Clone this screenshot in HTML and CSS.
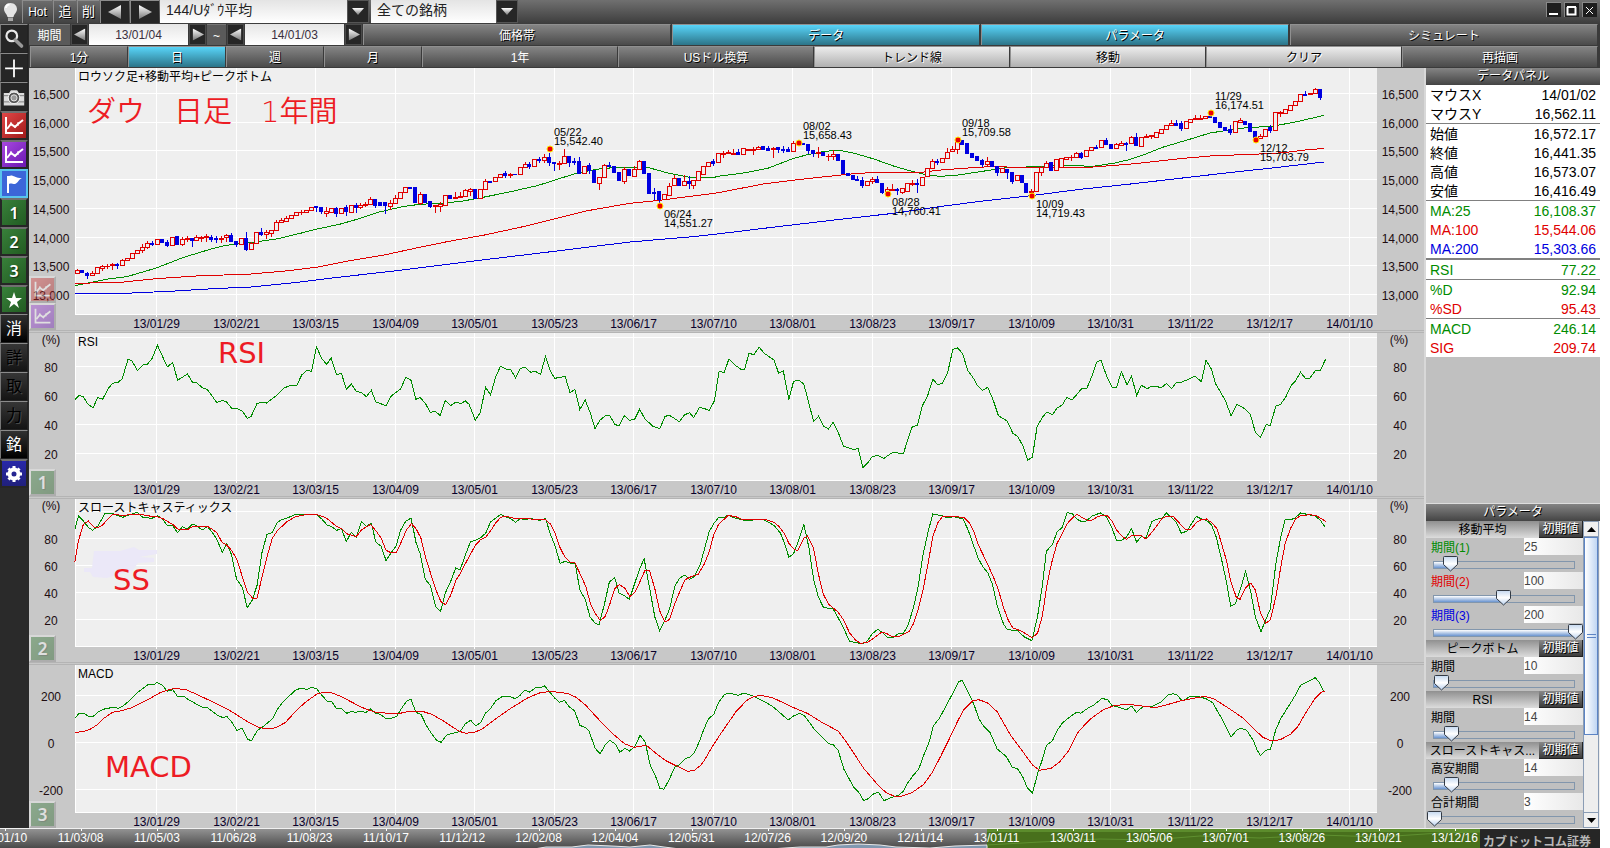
FILE: index.html
```html
<!DOCTYPE html>
<html lang="ja">
<head>
<meta charset="utf-8">
<title>144/Uダウ平均 チャート</title>
<link rel="stylesheet" href="styles.css">
</head>
<body>
<svg class="defs" aria-hidden="true">
  <symbol id="i-chart" viewBox="0 0 24 24">
    <path d="M4 3v16h17" fill="none" stroke="currentColor" stroke-width="2"/>
    <path d="M5 15l4-5 4 3 3-3 5-4" fill="none" stroke="currentColor" stroke-width="2"/>
    <path d="M9 8v4M13 11v3M16 8v4" fill="none" stroke="currentColor" stroke-width="1"/>
  </symbol>
  <symbol id="i-left" viewBox="0 0 14 14"><path d="M13 0v14L0 7z" fill="url(#metal)"/></symbol>
  <symbol id="i-right" viewBox="0 0 14 14"><path d="M1 0v14l13-7z" fill="url(#metal)"/></symbol>
  <symbol id="i-down" viewBox="0 0 12 8"><path d="M0 0h12L6 7z" fill="url(#metal)"/></symbol>
  <defs>
    <linearGradient id="metal" x1="0" y1="0" x2="0" y2="1"><stop offset="0" stop-color="#fff"/><stop offset="1" stop-color="#777"/></linearGradient>
  </defs>
</svg>

<header class="titlebar">
  <button class="tb bulb" aria-label="ヒント"><svg viewBox="0 0 21 23"><path d="M10.500 3c-4 0-6.500 3-6.500 6 0 3.500 3 5 3.500 8h6c.5-3 3.500-4.500 3.500-8 0-3-2.500-6-6.500-6z" fill="#e4e4e4"/><path d="M6 8c0-2 1.500-3.500 3.500-3.500" stroke="#fff" stroke-width="2" fill="none"/><path d="M8 17.500h5v3.500H8z" fill="#a8a8a8"/></svg></button>
  <button class="tb hot">Hot</button>
  <button class="tb add">追</button>
  <button class="tb del">削</button>
  <button class="tb nav" aria-label="前へ"><svg viewBox="0 0 14 14"><use href="#i-left"/></svg></button>
  <button class="tb nav" aria-label="次へ"><svg viewBox="0 0 14 14"><use href="#i-right"/></svg></button>
  <div class="combo wide"><select aria-label="銘柄"><option>144/Uﾀﾞｳ平均</option></select><span class="drop"><svg viewBox="0 0 12 8"><use href="#i-down"/></svg></span></div>
  <div class="combo"><select aria-label="銘柄グループ"><option>全ての銘柄</option></select><span class="drop"><svg viewBox="0 0 12 8"><use href="#i-down"/></svg></span></div>
  <div class="winbtns">
    <button aria-label="最小化"><svg viewBox="0 0 13 13"><path d="M2 10h9" stroke="#fff" stroke-width="2"/></svg></button>
    <button aria-label="最大化"><svg viewBox="0 0 13 13"><path d="M2.500 3v7.500h8V3M2 3h9" stroke="#fff" stroke-width="2" fill="none"/></svg></button>
    <button aria-label="閉じる"><svg viewBox="0 0 13 13"><path d="M3 3l7 7M10 3l-7 7" stroke="#fff" stroke-width="1"/></svg></button>
  </div>
</header>

<div class="workspace">
  <nav class="sidebar">
    <button aria-label="検索"><svg viewBox="0 0 27 27"><circle cx="11" cy="10" r="6" fill="none" stroke="#e8e8e8" stroke-width="2.500"/><path d="M15 14.500l7 7" stroke="#999" stroke-width="4" stroke-linecap="round"/></svg></button>
    <button aria-label="十字線"><svg viewBox="0 0 27 27"><path d="M13.500 4v20M3.500 14h20" stroke="#fff" stroke-width="2"/></svg></button>
    <button aria-label="撮影"><svg viewBox="0 0 27 27"><path d="M2 9h6l2-3h7l2 3h6v14H2z" fill="#dcdcdc"/><path d="M2 12h23M2 19h23" stroke="#777"/><circle cx="13.500" cy="14.500" r="6.500" fill="#555" stroke="#fff"/><circle cx="13.500" cy="14.500" r="3.500" fill="#999" stroke="#eee"/></svg></button>
    <button class="red" aria-label="チャート1"><svg viewBox="0 0 24 24"><use href="#i-chart"/></svg></button>
    <button class="purple" aria-label="チャート2"><svg viewBox="0 0 24 24"><use href="#i-chart"/></svg></button>
    <button class="blue" aria-label="フラグ"><svg viewBox="0 0 24 24"><path d="M6 4v17" stroke="#fff" stroke-width="2"/><path d="M7 4c4-2 5 2 13 2-3 1-4 5-7 6-3 0-4-1-6 0z" fill="#fff"/></svg></button>
    <button class="green">1</button>
    <button class="green">2</button>
    <button class="green">3</button>
    <button class="green" aria-label="お気に入り"><svg viewBox="0 0 24 24"><path d="M12 4l2 6h6l-5 4 2 6-5-4-5 4 2-6-5-4h6z" fill="#fff"/></svg></button>
    <button class="glyph">消</button>
    <button class="glyph" disabled>詳</button>
    <button class="glyph" disabled>取</button>
    <button class="glyph" disabled>力</button>
    <button class="glyph">銘</button>
    <button class="navy" aria-label="設定"><svg viewBox="0 0 24 24"><circle cx="12" cy="12" r="4.500" fill="none" stroke="#fff" stroke-width="4"/><path d="M12 4v3M12 17v3M4 12h3M17 12h3M6.500 6.500l2 2M15.500 15.500l2 2M6.500 17.500l2-2M15.500 8.500l2-2" stroke="#fff" stroke-width="3"/></svg></button>
  </nav>

  <div class="main">
    <div class="range">
      <span class="label">期間</span>
      <button class="step" aria-label="開始日を前へ"><svg viewBox="0 0 14 14"><use href="#i-left"/></svg></button>
      <input aria-label="開始日" value="13/01/04">
      <button class="step" aria-label="開始日を次へ"><svg viewBox="0 0 14 14"><use href="#i-right"/></svg></button>
      <span class="label tilde">~</span>
      <button class="step" aria-label="終了日を前へ"><svg viewBox="0 0 14 14"><use href="#i-left"/></svg></button>
      <input aria-label="終了日" value="14/01/03">
      <button class="step" aria-label="終了日を次へ"><svg viewBox="0 0 14 14"><use href="#i-right"/></svg></button>
      <button class="tab">価格帯</button>
      <button class="tab on">データ</button>
      <button class="tab on">パラメータ</button>
      <button class="tab">シミュレート</button>
    </div>
    <div class="periods">
      <button class="tab">1分</button>
      <button class="tab on">日</button>
      <button class="tab">週</button>
      <button class="tab">月</button>
      <button class="tab flat">1年</button>
      <button class="tab">USドル換算</button>
      <button class="tab light">トレンド線</button>
      <button class="tab light">移動</button>
      <button class="tab light">クリア</button>
      <button class="tab">再描画</button>
    </div>

    <div class="content">
      <div class="charts">
        <section class="panel">
          <svg class="plot" id="price"></svg>
          <h2>ロウソク足+移動平均+ピークボトム</h2>
          <p class="note dow">ダウ　日足　1年間</p>
          <div class="badges">
            <button class="badge red" aria-label="チャート1"><svg viewBox="0 0 24 24"><use href="#i-chart"/></svg></button>
            <button class="badge purple" aria-label="チャート2"><svg viewBox="0 0 24 24"><use href="#i-chart"/></svg></button>
          </div>
        </section>
        <section class="panel">
          <svg class="plot" id="rsi"></svg>
          <h2>RSI</h2>
          <p class="note rsi">RSI</p>
          <div class="badges"><button class="badge green">1</button></div>
        </section>
        <section class="panel">
          <svg class="plot" id="stoch"></svg>
          <h2>スローストキャスティックス</h2>
          <p class="note ss">SS</p>
          <div class="badges"><button class="badge green">2</button></div>
        </section>
        <section class="panel last">
          <svg class="plot" id="macd"></svg>
          <h2>MACD</h2>
          <p class="note macd">MACD</p>
          <div class="badges"><button class="badge green">3</button></div>
        </section>
      </div>

      <aside class="side">
        <h3 class="bar">データパネル</h3>
        <table class="data">
          <tbody>
            <tr><th scope="row">マウスX</th><td>14/01/02</td></tr>
            <tr><th scope="row">マウスY</th><td>16,562.11</td></tr>
          </tbody>
          <tbody>
            <tr><th scope="row">始値</th><td>16,572.17</td></tr>
            <tr><th scope="row">終値</th><td>16,441.35</td></tr>
            <tr><th scope="row">高値</th><td>16,573.07</td></tr>
            <tr><th scope="row">安値</th><td>16,416.49</td></tr>
          </tbody>
          <tbody>
            <tr class="g"><th scope="row">MA:25</th><td>16,108.37</td></tr>
            <tr class="r"><th scope="row">MA:100</th><td>15,544.06</td></tr>
            <tr class="b"><th scope="row">MA:200</th><td>15,303.66</td></tr>
          </tbody>
          <tbody class="thick">
            <tr class="g"><th scope="row">RSI</th><td>77.22</td></tr>
          </tbody>
          <tbody>
            <tr class="g"><th scope="row">%D</th><td>92.94</td></tr>
            <tr class="r"><th scope="row">%SD</th><td>95.43</td></tr>
          </tbody>
          <tbody>
            <tr class="g"><th scope="row">MACD</th><td>246.14</td></tr>
            <tr class="r"><th scope="row">SIG</th><td>209.74</td></tr>
          </tbody>
        </table>

        <div class="params">
          <h3 class="bar">パラメータ</h3>
          <div class="scroller">
            <form class="groups">
              <div class="ghead"><h4>移動平均</h4><button type="button">初期値</button></div>
              <div class="param g"><label for="p1">期間(1)</label><input id="p1" value="25"><div class="slider" style="--fill:11%"><input type="range" aria-label="期間(1)" min="3" max="200" value="25"></div></div>
              <div class="param r"><label for="p2">期間(2)</label><input id="p2" value="100"><div class="slider" style="--fill:49%"><input type="range" aria-label="期間(2)" min="3" max="200" value="100"></div></div>
              <div class="param b"><label for="p3">期間(3)</label><input id="p3" value="200"><div class="slider" style="--fill:100%"><input type="range" aria-label="期間(3)" min="3" max="200" value="200"></div></div>
              <div class="ghead"><h4>ピークボトム</h4><button type="button">初期値</button></div>
              <div class="param"><label for="p4">期間</label><input id="p4" value="10"><div class="slider" style="--fill:5%"><input type="range" aria-label="期間" min="5" max="110" value="10"></div></div>
              <div class="ghead"><h4>RSI</h4><button type="button">初期値</button></div>
              <div class="param"><label for="p5">期間</label><input id="p5" value="14"><div class="slider" style="--fill:12%"><input type="range" aria-label="RSI 期間" min="2" max="104" value="14"></div></div>
              <div class="ghead"><h4>スローストキャス...</h4><button type="button">初期値</button></div>
              <div class="param"><label for="p6">高安期間</label><input id="p6" value="14"><div class="slider" style="--fill:12%"><input type="range" aria-label="高安期間" min="2" max="104" value="14"></div></div>
              <div class="param"><label for="p7">合計期間</label><input id="p7" value="3"><div class="slider" style="--fill:0%"><input type="range" aria-label="合計期間" min="3" max="100" value="3"></div></div>
            </form>
            <div class="sbar">
              <button aria-label="上へ"><svg viewBox="0 0 9 5"><path d="M0 5h9L4.500 0z"/></svg></button>
              <div class="strack"><div class="sthumb"></div></div>
              <button aria-label="下へ"><svg viewBox="0 0 9 5"><path d="M0 0h9L4.500 5z"/></svg></button>
            </div>
          </div>
        </div>
      </aside>
    </div>
  </div>
</div>

<footer class="timeline">
  <svg id="timeline"></svg>
  <div class="brand">カブドットコム証券</div>
</footer>
<script src="charts.js"></script>
</body>
</html>
```
FILE: styles.css
```css
* { box-sizing: border-box; }

body {
  margin: 0;
  padding-right: 10px;
  height: 100vh;
  min-height: 600px;
  display: flex;
  flex-direction: column;
  overflow: hidden;
  background: #fff;
  color: #000;
  font: 12px/16px "Liberation Sans", "Noto Sans CJK JP", sans-serif;
}

h2, h3, h4, p { margin: 0; font-weight: normal; }

button, input, select {
  margin: 0;
  padding: 0;
  border: 0;
  border-radius: 0;
  font: inherit;
  color: inherit;
  background: none;
}

.defs { position: absolute; width: 0; height: 0; }

/* title bar */
.titlebar {
  flex: none;
  display: flex;
  gap: 1px;
  height: 24px;
  background: linear-gradient(#707070, #3c3c3c);
  color: #fff;
}

.tb {
  height: 23px;
  border-top: 1px solid #8c8c8c;
  border-left: 1px solid #8c8c8c;
  background: linear-gradient(#6c6c6c, #424242);
  text-shadow: 1px 1px 0 #000;
}

.tb svg, .step svg, .drop svg { display: block; margin: auto; }
.bulb { width: 21px; border: 0; }
.bulb svg { width: 21px; height: 23px; }
.hot { width: 30px; }
.add { width: 23px; font-size: 13px; }
.del { width: 22px; font-size: 13px; }
.nav { width: 29px; background: #262626; }
.nav svg { width: 14px; height: 14px; }

.combo { display: flex; width: 147px; margin-right: 1px; }
.combo.wide { width: 209px; }

.combo select {
  flex: 1;
  height: 23px;
  padding: 0 6px 4px;
  appearance: none;
  background: linear-gradient(#e4e4e4, #fff);
  color: #222;
  font-size: 14px;
  line-height: 18px;
}

.drop { display: flex; width: 22px; height: 23px; background: #262626; border: 1px solid #555; }
.drop svg { width: 12px; height: 8px; }

.winbtns { display: flex; gap: 3px; margin-left: auto; padding: 2px 3px 0 0; }

.winbtns button {
  width: 15px;
  height: 15px;
  background: #1e1e1e;
  border-top: 1px solid #888;
  border-left: 1px solid #888;
}

.winbtns svg { display: block; width: 13px; height: 13px; }

/* side tools */
.workspace { flex: 1; min-height: 0; display: flex; }

.sidebar { flex: none; width: 29px; background: #2a2a2a; }

.sidebar button {
  display: flex;
  align-items: center;
  justify-content: center;
  width: 28px;
  height: 29px;
  border: 1px solid #222;
  border-top-color: #8a8a8a;
  border-left-color: #777;
  background: #262626;
  color: #fff;
  font-size: 16px;
}

.sidebar svg { width: 24px; height: 24px; }
.sidebar button.red, .badge.red { background: linear-gradient(135deg, #e04848, #a01818); }
.sidebar button.purple, .badge.purple { background: linear-gradient(135deg, #a848e0, #6a18b0); }
.sidebar button.blue { background: #3c66d8; border: 2px solid #58c4ec; }
.sidebar button.green, .badge.green { background: linear-gradient(135deg, #38803a, #225c22); }
.sidebar button.navy { background: linear-gradient(#2828a8, #20207c); }
.sidebar button.green, .badge.green { font-family: "Noto Sans", sans-serif; font-weight: 600; text-shadow: 1px 1px 1px #0008; }
.sidebar button.glyph { background: linear-gradient(#303030, #000); font-size: 16px; }
.sidebar button.glyph:disabled { background: linear-gradient(#363636, #141414); color: #000; text-shadow: 1px 1px 0 #484848; }
.sidebar button.red, .sidebar button.purple, .sidebar button.green, .sidebar button.navy {
  border: 2px solid #262626;
  border-top-color: #707070;
}

/* upper toolbars */
.main { flex: 1; min-width: 0; display: flex; flex-direction: column; }

.range, .periods {
  flex: none;
  height: 22px;
  padding-right: 2px;
  padding-bottom: 1px;
  background: #3a3a3a;
  color: #fff;
}

.range { display: flex; gap: 1px; }

.periods {
  display: grid;
  grid-template-columns: repeat(4, 1fr) repeat(6, 2fr);
  padding-left: 1px;
}

.range .label { width: 41px; background: #5a5a5a; text-align: center; line-height: 22px; border-top: 1px solid #777; }
.range .label.tilde { width: 19px; }
.range .step { width: 17px; background: #262626; border: 1px solid #4a4a4a; }
.step svg { width: 12px; height: 13px; }
.range input { width: 99px; text-align: center; color: #3a3040; background: linear-gradient(#e6e6e6, #fff); }
.range .tab { flex: 1; }

.tab {
  padding-top: 1px;
  border-top: 1px solid #909090;
  border-left: 1px solid #909090;
  border-right: 1px solid #3a3a3a;
  background: linear-gradient(#848484, #4a4a4a);
  color: #fff;
  text-shadow: 1px 1px 0 #000;
}

.tab.on { background: linear-gradient(#58d4f8, #2c7488); }
.tab.flat { text-shadow: none; }
.tab.light { background: linear-gradient(#ececec, #b0b0b0); color: #000; text-shadow: 1px 1px 0 #fff; }

/* chart column */
.content { flex: 1; min-height: 0; display: flex; }

.charts {
  flex: 1;
  min-width: 0;
  display: grid;
  grid-template-rows: 265fr 166fr 166fr 163fr;
  border-right: 2px solid #d8d8d8;
  background: #c8c8c8;
}

.panel { position: relative; min-height: 0; border-bottom: 3px double #b4b4b4; }
.panel.last { border-bottom: 0; }
.plot { position: absolute; inset: 0; width: 100%; height: 100%; }
.panel h2 { position: absolute; left: 49px; top: 1px; font-size: 12px; line-height: 16px; }

.note { position: absolute; color: #ed1c24; font: 29px/32px "DejaVu Sans", "Noto Sans CJK JP", sans-serif; white-space: nowrap; }
.note.dow { left: 58px; top: 28px; font-weight: 350; }
.note.rsi { left: 189px; top: 4px; }
.note.ss { left: 84px; top: 65px; }
.note.macd { left: 76px; top: 86px; }

.badges { position: absolute; left: 0; bottom: 0; opacity: 0.42; }

.badge {
  display: flex;
  align-items: center;
  justify-content: center;
  width: 27px;
  height: 27px;
  border: 2px solid #888;
  border-top-color: #eee;
  border-left-color: #eee;
  color: #fff;
  font-size: 17px;
}

.badge svg { width: 21px; height: 21px; }

.plot text { font-size: 12px; fill: #200c10; }
.plot .date { fill: #08002a; }
.plot .peak text { font-size: 11px; fill: #000; }
.plot-bg { fill: #efefef; }
.grid { stroke: #fff; stroke-width: 1; shape-rendering: crispEdges; }
.trace { fill: none; stroke-width: 1; shape-rendering: crispEdges; }
.green-line { stroke: #008c00; }
.red-line { stroke: #e00000; }
.blue-line { stroke: #0000e0; }
.candle { shape-rendering: crispEdges; }
.up { stroke: #e00000; fill: #efefef; }
.down { stroke: #0000e0; fill: #0000e0; }
.peak circle { fill: #f00000; stroke: #ffe800; stroke-width: 1; }
.smudge { fill: #ebe8f8; }

/* data panel */
.side {
  flex: none;
  width: 174px;
  display: flex;
  flex-direction: column;
  min-height: 0;
  background: #c0c0c0;
}

.bar {
  flex: none;
  height: 17px;
  background: linear-gradient(#848484, #444);
  color: #fff;
  font-size: 12px;
  line-height: 17px;
  text-align: center;
  text-shadow: 1px 1px 0 #000;
}

.data { width: 100%; border-collapse: collapse; background: #fff; font-size: 14px; line-height: 17px; }
.data tbody + tbody { border-top: 1px solid #808080; }
.data tbody.thick { border-top: 2px solid #808080; }
.data th, .data td { height: 19px; padding: 2px 4px 0; font-weight: normal; }
.data th { text-align: left; }
.data td { text-align: right; }
.g { color: #008c00; }
.r { color: #e00000; }
.b { color: #0000e0; }

/* parameters */
.params { margin-top: auto; height: 325px; display: flex; flex-direction: column; border-top: 1px solid #ddd; }
.scroller { flex: 1; min-height: 0; display: flex; }
.groups { flex: 1; min-width: 0; overflow: hidden; }
.ghead { display: flex; height: 17px; line-height: 18px; }

.ghead h4 {
  flex: 1;
  min-width: 0;
  overflow: hidden;
  white-space: nowrap;
  text-align: center;
  font-size: 12px;
  background: linear-gradient(#909090, #dcdcdc);
}

.ghead button {
  width: 44px;
  background: linear-gradient(#888, #3c3c3c);
  border-right: 1px solid #222;
  border-bottom: 1px solid #222;
  color: #fff;
  text-shadow: 1px 1px 0 #000;
  line-height: 16px;
}

.param { display: grid; grid-template-columns: 1fr 59px; grid-template-rows: 17px 17px; padding-left: 1px; }
.param label { padding-left: 4px; line-height: 20px; }
.param > input { width: 59px; color: #444; background: linear-gradient(90deg, #fff, #e8e8e8); }
.slider { position: relative; grid-column: 1 / 3; }
.slider input { position: relative; display: block; width: 100%; height: 17px; appearance: none; }

.slider::before {
  content: "";
  position: absolute;
  left: 6px;
  right: 8px;
  top: 6px;
  height: 6px;
  border: 1px solid #8296ac;
  background: linear-gradient(#fff, #6a94d0) no-repeat 0 0 / var(--fill) 100%;
}

.slider input::-webkit-slider-thumb {
  appearance: none;
  width: 15px;
  height: 16px;
  background: url("data:image/svg+xml,%3Csvg xmlns='http://www.w3.org/2000/svg' viewBox='0 0 15 16'%3E%3ClinearGradient id='a' x2='0' y2='1'%3E%3Cstop stop-color='%23c4d8f0'/%3E%3Cstop offset='.5' stop-color='%23fff'/%3E%3Cstop offset='1' stop-color='%23b8d0ee'/%3E%3C/linearGradient%3E%3Cpath d='M.5 1.500q0-1 1-1h12q1 0 1 1v7l-7 6.500-7-6.500z' fill='url(%23a)' stroke='%23333a44'/%3E%3C/svg%3E") no-repeat;
}

.sbar { flex: none; display: flex; flex-direction: column; width: 17px; padding-right: 1px; background: #eee; }
.sbar button { flex: none; height: 16px; border: 1px solid #8a9cb4; background: #f0f0f0; line-height: 0; }
.sbar button svg { width: 9px; height: 5px; }
.strack { flex: 1; border-left: 1px solid #8a9cb4; border-right: 1px solid #8a9cb4; background: #eee; }

.sthumb {
  height: 72%;
  border: 1px solid #5c84c4;
  background:
    linear-gradient(#5c84c4 1px, transparent 1px) no-repeat center 49% / 9px 1px,
    linear-gradient(#5c84c4 1px, transparent 1px) no-repeat center 51% / 9px 1px,
    linear-gradient(90deg, #fff, #c0d6f2);
}

/* timeline */
.timeline {
  flex: none;
  position: relative;
  display: flex;
  height: 20px;
  overflow: hidden;
  background: linear-gradient(#929292, #4a4a4a);
  border-top: 1px solid #f0f0f0;
}

.timeline svg { flex: 1; min-width: 0; height: 19px; }
.timeline text { font-size: 12px; fill: #fff; }
.selected { fill: #48701c; }
.selected-top { fill: #5c8c2c; }
.history { fill: #8098b0; stroke: #e8e8e8; stroke-width: 1; }
.history-selected { fill: none; stroke: #5f9030; stroke-width: 1; }

.brand {
  flex: none;
  width: 120px;
  padding: 7px 0 0 3px;
  background: #262626;
  color: #b8b8b8;
  font-size: 12px;
  font-weight: bold;
  line-height: 12px;
  white-space: nowrap;
}
```
FILE: charts.js
```js
const NS = 'http://www.w3.org/2000/svg';

// Axis geometry of a panel, in pixels.
const AXIS = 46;
const AXIS_RIGHT = 47;
const PLOT_WIDTH = 1302;
const PLOT_LEFT = 75;

const DATES = ['13/01/29', '13/02/21', '13/03/15', '13/04/09', '13/05/01', '13/05/23', '13/06/17', '13/07/10',
  '13/08/01', '13/08/23', '13/09/17', '13/10/09', '13/10/31', '13/11/22', '13/12/17', '14/01/10'];

// Candles, one per session: direction, body top, body bottom, high, low (thirds of a unit).
const CANDLES = `r629,638,626,638 b629,637 b640,644,636,654 r638,646,632,646 r622,638 r619,624,614,630 r617,619,611,625 r611,616,609,626
b611,614,609,623 r601,615,596 r593,601 r580,593 r569,580 r562,569,551,577 r550,560,542,564 b548,551,543,554 r538,552 b538,547
b547,554,541,558 r530,556 b529,552 r536,553,530,556 r534,538,529,542 b534,540,534,557 r531,541,526 r532,534,528,543 r528,531,522,542
b530,536,524,542 b534,536,528,545 r533,537,529,547 r526,532,521,542 b526,543,519,543 b543,552,543,558 r533,552 b533,567,516,569
r550,568,545 r517,549 b515,522,504,524 r517,523,509,535 r509,518,509,528 r487,509,480 r481,487,474 r474,482,468 r464,474 r455,464
r455,457,450,463 r450,456 r440,450 b439,440,438,453 b442,453,442,459 r454,459,442,467 r443,455 b443,460,441,468 r443,459
b441,454,436,464 r435,456 b436,440,430,457 r434,441,429,443 r432,434,426,438 r417,431,411 b418,434,418,441 b427,434 b426,435,426,459
r430,437,420,448 r415,428,405 r395,415 r382,395 b381,383 b382,427 r402,428,397,433 b401,425 b423,438,423,441 r435,438,435,456
r432,437,426,453 r406,434 b404,414 r411,414,396 r407,411,395 r391,407,386 r388,392,383,405 b388,413 r388,413 r364,387,358 b362,365
r350,364 r341,351 b340,344,333,351 r341,345,339,350 b341,343 r321,341 r312,321,307 b312,319,307,325 r298,319 b297,300,290,306
r291,300,283,306 b291,306,278,315 b306,309,306,329 r308,312,302,327 r289,308,266 b289,305,289,319 b303,306,295,313 b304,338,291
r317,338 b316,329,308,338 b329,366 r351,368,351,387 r316,351,313 b314,318,305 b317,336 b336,360 r328,362,321,369 b326,345
r326,348,317 r303,326,300 b303,339 b339,399 b395,400,383,416 b393,416,393,430 r401,417 r377,404,369 r354,374,345 b353,375
r364,374,344 b364,369,349,384 r361,374,361,383 r333,361 r318,341 r306,319 b304,308,297,314 r280,307 r278,281,273,291 r275,278,270
r278,282,267 b275,281,267 r265,281 r268,271 r267,270,261,283 r262,268,258 b257,267 b264,269,258 r264,267,262,290 b262,267,262,276
b267,269,258,275 b268,273,261 r250,272,244 r248,252,240 b248,253 b252,271,252,279 b271,278,271,287 r275,279,262,290 b276,286
r287,289,283,299 r282,287,270,298 b283,299 b299,338 b338,344 b345,358 b357,360,347 b359,376,352,380 r364,376 r357,362,350,370
b357,366,348 b369,396,369,399 r388,398,380,404 r386,390,373 b388,390,384,402 r384,396,384,399 r370,393 r369,372,360,376
b369,371,357,396 r350,374 r325,348 r304,325,296 b304,306,297,312 r295,306 r275,295,264 r267,274,258 r242,268,240,280 b240,252
b249,280 b280,290 b288,300 b299,312,297,318 r304,311,292,318 b304,318 b318,335,318,345 r325,337 b327,337,327,353 b337,362,337,368
r345,360 b345,367 b368,396 r393,397,387 r337,394 r322,336,317,345 r308,321,303 b307,330 r296,331 r295,320 r290,297 r290,292,285,301
r280,292,276 b280,290,275,295 r271,289 r260,270 b261,264,255 r240,261 b239,251,234 b251,263 r252,263,248 r250,254,243
b248,251,246,270 r232,250,228 b230,255,219 r231,257 r227,231,222 r225,229,225,234 r217,232 r206,220 r194,208 r189,194,180
b188,194,180 b190,204,183,210 r184,203 r176,186 r174,177,165 r173,176,166 r169,173 b168,171 b171,187 b186,201 b201,209
b206,216,196,222 r184,217 r180,186,174 b182,191 b190,213 b213,233 r229,234,222 r207,229 b200,210,196,216 r157,209 r156,160,152,168
r148,158 r136,149 r124,136 r102,124 b102,105,93 r100,103 r88,100,84 b87,112,87,117`;

const PEAKS = [
  [550, 149, '05/22', '15,542.40', -1], [660, 206, '06/24', '14,551.27', 1],
  [799, 143, '08/02', '15,658.43', -1], [888, 194, '08/28', '14,760.41', 1],
  [958, 140, '09/18', '15,709.58', -1], [1032, 196, '10/09', '14,719.43', 1],
  [1211, 113, '11/29', '16,174.51', -1], [1256, 140, '12/12', '15,703.79', 1],
];

// Every trace is two blocks of "x,y" samples; a chart's `blocks` gives each block's
// origin and horizontal samples per pixel. Vertical resolution is 3 per pixel.
const CHARTS = {
  price: {
    top: 68, height: 247, foot: 15, y0: 60, blocks: [[70, 2.3758], [720, 2.3059]],
    ticks: [[93, '16,500'], [122, '16,000'], [150, '15,500'], [179, '15,000'], [208, '14,500'], [237, '14,000'], [265, '13,500'], [294, '13,000']],
    traces: [
      ['green-line',
        '12,677 55,666 90,657 135,650 205,624 270,592 330,569 370,556 430,548 495,536 550,519 580,509 640,493 690,475 735,456 790,440 830,433 880,430 930,424 985,411 1040,397 1110,377 1150,361 1200,341 1250,328 1290,323 1375,323 1420,339 1475,353 1530,352',
        '0,348 50,340 110,325 170,295 205,283 240,274 275,271 310,280 355,297 400,318 440,333 480,346 510,349 550,345 600,335 660,323 730,320 800,316 860,319 910,309 940,300 980,283 1020,262 1080,239 1130,219 1180,209 1215,203 1270,199 1320,188 1393,166'],
      ['red-line',
        '12,670 120,667 205,656 300,648 430,642 520,632 590,621 660,603 750,584 830,562 900,544 985,525 1080,499 1150,477 1230,452 1330,430 1400,421 1480,408 1530,400',
        '0,397 100,372 180,359 250,349 310,341 360,337 460,338 500,331 560,325 620,320 740,323 850,322 940,313 1000,305 1060,296 1140,287 1230,283 1300,278 1350,270 1393,265'],
      ['blue-line',
        '12,702 130,700 250,693 340,686 430,681 540,667 630,653 790,630 940,606 1150,574 1330,546 1480,530 1530,523',
        '0,521 120,502 270,479 400,460 500,441 600,424 718,407 830,388 940,373 1040,358 1180,337 1280,323 1393,306'],
    ],
  },
  rsi: {
    top: 333, height: 148, foot: 15, y0: 330, unit: '(%)', blocks: [[20, 2.24], [700, 2.148]],
    ticks: [[337, ''], [366, '80'], [395, '60'], [424, '40'], [453, '20']],
    traces: [
      ['green-line',
        '123,209 132,196 142,201 153,224 164,233 174,202 185,208 197,177 207,160 220,157 229,146 242,88 251,93 263,122 277,104 285,103 296,85 308,46 330,111 342,97 353,151 375,132 386,156 396,158 408,173 420,179 441,218 453,211 463,216 474,235 485,235 498,243 509,265 518,259 531,220 542,217 552,219 575,196 590,175 606,166 620,166 631,135 642,121 653,124 664,50 676,86 687,103 697,84 709,134 720,130 731,178 742,162 753,184 765,188 776,200 787,181 797,216 820,227 831,199 853,176 864,142 876,151 887,208 896,202 908,220 919,247 930,244 941,256 953,211 964,227 976,217 988,220 998,213 1006,223 1020,271 1031,247 1043,172 1054,195 1065,143 1076,109 1088,117 1099,118 1110,143 1121,115 1132,112 1144,127 1154,124 1166,133 1177,80 1188,124 1198,145 1221,139 1232,188 1243,178 1254,239 1266,210 1278,251 1288,296 1299,271 1311,257 1321,257 1333,284 1342,287 1354,257 1365,271 1377,267 1388,238 1400,267 1418,289 1433,296 1445,259 1455,256 1477,275 1488,255 1500,248 1509,263 1522,232',
        '10,236 20,242 31,212 41,124 52,128 62,87 78,108 88,118 96,118 105,70 116,74 127,51 138,70 159,90 169,130 179,123 191,209 201,154 212,150 223,162 244,274 255,258 265,288 276,297 286,276 297,308 308,348 329,358 340,356 350,413 360,399 370,380 382,376 395,385 414,367 437,371 446,330 456,290 467,286 478,226 489,197 500,148 511,164 521,160 532,128 543,58 553,54 564,70 575,121 590,150 596,167 607,181 618,172 630,211 641,257 660,273 672,310 683,320 694,349 704,391 714,381 724,290 735,263 745,246 757,254 767,234 778,225 788,202 799,210 820,176 831,175 842,138 852,97 861,90 874,140 885,172 895,172 905,125 917,164 927,139 938,196 948,166 961,176 970,169 992,172 1002,160 1013,176 1023,157 1034,157 1063,139 1077,155 1087,91 1099,119 1107,160 1128,210 1141,258 1153,223 1170,236 1182,253 1193,307 1204,322 1216,284 1225,286 1237,228 1247,223 1258,202 1269,168 1279,153 1290,127 1301,146 1309,146 1322,122 1333,120 1344,87'],
    ],
  },
  stoch: {
    top: 499, height: 148, foot: 15, y0: 330, unit: '(%)', blocks: [[20, 2.24], [700, 2.148]],
    ticks: [[511, ''], [538, '80'], [565, '60'], [592, '40'], [619, '20']],
    traces: [
      ['green-line',
        '123,597 131,558 142,573 153,592 163,601 175,587 190,551 205,550 220,557 230,562 240,557 262,547 275,562 295,565 308,557 318,566 330,586 342,587 353,608 364,590 375,597 387,582 397,588 408,600 420,590 430,606 441,628 453,667 463,640 474,675 485,747 498,772 509,833 520,811 531,766 542,668 553,614 565,607 575,580 585,569 597,565 617,553 664,553 676,567 688,585 698,590 709,601 720,596 731,635 742,607 753,622 765,574 776,589 787,580 797,636 809,649 820,692 831,669 843,647 852,602 864,574 876,564 887,637 896,670 908,748 919,766 931,829 942,844 953,788 965,753 976,714 986,719 998,674 1009,635 1020,631 1031,624 1043,610 1054,576 1077,553 1088,560 1100,567 1110,577 1121,566 1132,569 1144,564 1154,569 1166,571 1177,565 1188,612 1198,646 1210,700 1221,694 1232,699 1244,702 1254,780 1266,808 1277,861 1289,881 1297,884 1309,823 1320,757 1332,742 1342,790 1354,797 1365,808 1377,760 1388,717 1398,686 1410,772 1422,861 1433,902 1445,869 1455,837 1467,768 1477,745 1489,735 1500,748 1510,740',
        '0,706 10,655 20,604 30,580 40,562 52,563 60,555 73,563 95,571 135,569 148,577 160,588 173,610 180,634 191,682 201,671 211,635 223,583 234,653 244,748 254,800 265,832 286,837 297,864 308,893 321,934 350,942 360,932 370,911 382,898 392,908 402,921 415,922 426,911 437,910 447,885 458,835 468,775 479,675 490,605 500,552 522,558 533,564 545,560 565,567 576,600 597,683 607,709 618,728 628,762 639,830 652,882 660,899 682,902 697,921 713,932 725,860 735,770 744,664 757,643 767,606 778,592 789,547 800,552 810,568 820,575 830,573 842,558 860,549 873,561 884,590 895,632 906,631 916,621 927,596 938,637 948,619 958,624 970,576 980,568 992,565 1002,549 1013,563 1022,575 1034,610 1046,603 1056,581 1066,559 1077,567 1088,571 1099,585 1109,622 1119,680 1130,750 1140,829 1150,822 1162,772 1172,724 1183,785 1193,861 1205,905 1215,870 1225,837 1237,700 1247,625 1257,568 1268,570 1279,563 1290,549 1311,555 1322,558 1333,572 1342,590'],
      ['red-line',
        '123,695 131,632 142,583 153,573 165,591 174,593 185,585 197,567 208,553 230,556 262,553 285,556 298,561 308,560 320,566 342,583 353,597 375,599 387,590 420,589 430,597 441,608 453,638 464,646 475,663 487,692 498,740 509,786 521,804 531,804 542,742 553,682 565,625 576,603 597,576 617,560 640,554 664,553 685,563 709,589 722,597 731,611 753,620 765,600 785,583 797,602 809,624 820,661 831,668 843,667 853,639 866,599 877,581 887,596 898,624 908,680 931,778 943,815 953,824 965,795 976,752 986,731 998,700 1020,646 1031,630 1043,622 1054,603 1066,578 1077,562 1088,558 1110,566 1177,568 1188,582 1198,608 1210,654 1221,682 1232,696 1243,698 1254,730 1267,768 1278,822 1289,851 1300,872 1311,859 1321,823 1332,776 1342,764 1354,773 1366,800 1377,788 1388,757 1400,721 1410,721 1422,776 1433,843 1445,876 1455,868 1467,820 1489,750 1500,742 1520,732',
        '0,724 10,700 20,664 30,612 40,583 60,557 75,559 90,568 140,568 159,577 170,590 181,610 191,640 202,658 210,662 223,625 231,618 244,655 254,730 265,793 276,822 297,847 308,869 321,908 334,930 345,940 360,937 370,928 390,907 400,910 412,919 430,918 450,904 458,882 468,842 479,780 490,700 500,620 511,578 522,558 533,559 567,562 578,578 588,603 597,642 618,703 630,740 641,780 652,833 662,870 672,894 690,903 713,923 725,910 735,860 745,768 755,700 767,640 778,611 788,582 799,565 810,553 820,562 832,571 842,570 853,561 865,555 875,557 885,573 895,600 906,618 916,628 927,617 948,617 958,627 970,608 980,590 992,566 1004,558 1017,560 1029,578 1042,598 1054,598 1066,578 1077,568 1088,567 1100,579 1111,597 1120,640 1131,692 1140,753 1152,802 1160,808 1172,774 1183,759 1193,780 1204,850 1215,880 1225,870 1237,800 1247,715 1257,640 1268,597 1279,567 1290,557 1311,554 1325,558 1335,566 1345,575'],
    ],
  },
  macd: {
    top: 665, height: 148, foot: 15, y0: 650, blocks: [[0, 2.1778], [700, 1.7231]],
    ticks: [[695, '200'], [742, '0'], [789, '-200']],
    traces: [
      ['green-line',
        '164,204 172,190 182,190 193,199 203,199 214,186 224,178 246,172 258,175 267,169 280,154 301,126 323,103 336,103 342,97 354,106 364,124 376,119 386,138 400,138 408,147 430,164 442,172 452,173 475,197 486,203 494,199 505,217 516,241 527,234 539,268 548,272 560,242 575,228 594,205 605,176 615,158 642,122 655,114 668,118 680,112 690,117 700,134 712,153 722,154 733,176 744,176 755,190 765,184 775,187 785,184 797,187 807,177 818,190 828,193 840,205 851,205 864,199 873,178 886,153 895,148 906,187 917,194 930,230 940,251 951,271 961,277 972,256 981,251 993,248 1003,243 1013,222 1025,211 1036,227 1047,218 1057,190 1069,174 1080,152 1093,140 1111,140 1122,146 1132,137 1143,120 1153,126 1168,112 1177,113 1186,108 1196,124 1208,144 1218,157 1229,151 1240,171 1251,182 1263,226 1275,233 1283,244 1296,295 1307,311 1318,285 1328,271 1341,283 1350,307 1361,295 1371,303 1383,288 1394,256 1405,276 1416,345 1427,376 1437,415 1446,418 1458,387 1470,350 1480,344 1493,325 1503,321 1513,306',
        '0,270 5,245 14,208 24,192 32,157 42,134 50,129 66,136 76,129 92,138 108,152 125,169 152,210 160,199 172,190 180,197 198,240 222,281 230,285 238,301 248,358 265,412 275,430 282,452 290,446 300,430 308,428 317,452 332,441 342,436 350,424 358,399 367,377 377,357 385,318 395,275 402,228 412,206 420,181 446,95 452,91 464,134 472,163 480,204 488,227 500,248 512,297 528,320 538,352 547,356 556,380 564,414 573,429 582,369 590,328 597,286 607,273 616,240 625,218 640,197 650,186 656,190 668,175 677,167 693,145 703,150 710,167 718,170 735,179 744,168 752,187 762,172 770,168 779,170 796,154 806,135 815,131 822,135 831,153 845,139 860,140 873,147 884,159 892,185 900,208 915,261 925,240 932,234 942,241 953,270 960,300 966,317 975,301 983,298 992,240 1000,208 1010,180 1018,158 1026,135 1035,106 1050,93 1060,83 1066,95 1075,125'],
      ['red-line',
        '164,247 180,245 195,239 210,226 225,206 245,187 265,182 285,174 305,161 330,143 350,127 365,120 380,115 405,119 430,134 465,157 500,181 540,216 565,233 590,237 605,230 622,217 645,182 665,157 690,132 705,127 722,128 740,138 760,152 785,170 800,179 820,187 865,192 890,184 920,184 940,193 965,212 1000,244 1015,250 1035,246 1050,237 1080,206 1110,177 1150,143 1175,129 1200,124 1235,130 1255,142 1275,165 1305,210 1335,252 1360,281 1380,292 1408,286 1425,306 1450,332 1478,351 1498,364 1512,361',
        '0,348 8,330 20,293 35,253 50,215 62,185 80,152 92,140 105,136 125,143 160,172 185,190 210,217 238,243 255,283 282,355 305,402 320,427 335,439 347,439 365,428 385,404 400,368 415,318 430,265 445,210 455,178 470,152 480,149 495,158 512,185 535,255 555,302 573,345 585,361 605,355 620,335 635,303 652,245 672,208 695,179 715,166 740,163 765,169 785,173 805,164 825,154 850,145 870,139 885,146 905,168 935,203 955,238 970,262 985,273 1000,269 1018,252 1030,230 1045,185 1060,145 1070,127 1077,123'],
    ],
  },
};

function add(parent, name, attrs, text) {
  const node = document.createElementNS(NS, name);
  for (const key in attrs) node.setAttribute(key, attrs[key]);
  if (text) node.textContent = text;
  parent.appendChild(node);
  return node;
}

function drawChart(id) {
  const chart = CHARTS[id];
  const svg = document.getElementById(id);
  svg.replaceChildren();
  const width = svg.clientWidth;
  const plotW = width - AXIS - AXIS_RIGHT;
  const plotH = svg.clientHeight - chart.foot;
  const px = x => AXIS + (x - PLOT_LEFT) * plotW / PLOT_WIDTH;
  const py = y => (y - chart.top) * plotH / chart.height;
  const line = (x1, y1, x2, y2) => add(svg, 'line', { x1, y1, x2, y2, class: 'grid' });

  add(svg, 'rect', { x: AXIS, y: 0, width: plotW, height: plotH, class: 'plot-bg' });
  for (const [y, label] of chart.ticks) {
    const gy = Math.round(py(y)) + 0.5;
    line(AXIS, gy, AXIS + plotW, gy);
    if (!label) continue;
    add(svg, 'text', { x: 22, y: gy + 5, 'text-anchor': 'middle' }, label);
    add(svg, 'text', { x: width - 24, y: gy + 5, 'text-anchor': 'middle' }, label);
  }
  if (chart.unit) {
    for (const x of [22, width - 25]) add(svg, 'text', { x, y: 11, 'text-anchor': 'middle' }, chart.unit);
  }
  DATES.forEach((date, i) => {
    const gx = Math.round(px(156 + i * 79.5)) + 0.5;
    line(gx, 0, gx, plotH + 2);
    add(svg, 'text', { x: gx, y: plotH + 13, 'text-anchor': 'middle', class: 'date' }, date);
  });
  line(AXIS, plotH - 0.5, AXIS + plotW, plotH - 0.5);
  line(AXIS + 0.5, 0, AXIS + 0.5, plotH);
  if (id === 'stoch') {
    add(svg, 'path', { class: 'smudge', d: `M${px(94)} ${py(551)}h26l14-4 5 3h18v4l-18 3 15 1v4l-16 1-5 7-26 8-14-1-3-5h-6v-4h8z` });
  }

  for (const [cls, ...blocks] of chart.traces) {
    const points = blocks.flatMap((block, b) => block.split(' ').map(pair => {
      const [x, y] = pair.split(',').map(Number);
      const [origin, step] = chart.blocks[b];
      return `${px(origin + x / step)},${py(chart.y0 + y / 3)}`;
    }));
    add(svg, 'polyline', { points: points.join(' '), class: `trace ${cls}` });
  }
  if (id !== 'price') return;

  CANDLES.split(/\s+/).forEach((item, i) => {
    const [top, bottom, high = top, low = bottom] = item.slice(1).split(',').map(Number);
    const up = item[0] === 'r';
    const x = Math.round(px(77.2 + i * 4.97)) + 0.5;
    const at = v => Math.round(py(chart.y0 + v / 3)) + 0.5;
    const g = add(svg, 'g', { class: `candle ${up ? 'up' : 'down'}` });
    add(g, 'line', { x1: x, y1: at(high) - 0.5, x2: x, y2: at(low) + 0.5 });
    add(g, 'rect', { x: x - 2, y: at(top), width: up ? 4 : 3, height: Math.max(at(bottom) - at(top), 0.1) });
  });

  for (const [x, y, date, price, side] of PEAKS) {
    const g = add(svg, 'g', { class: 'peak' });
    const cx = px(x);
    const cy = py(y);
    const first = side < 0 ? cy - 13 : cy + 12;
    add(g, 'circle', { cx, cy, r: 3 });
    add(g, 'text', { x: cx + 4, y: first }, date);
    add(g, 'text', { x: cx + 4, y: first + 9 }, price);
  }
}

const HISTORY = ['11/01/10', '11/03/08', '11/05/03', '11/06/28', '11/08/23', '11/10/17', '11/12/12', '12/02/08', '12/04/04', '12/05/31',
  '12/07/26', '12/09/20', '12/11/14', '13/01/11', '13/03/11', '13/05/06', '13/07/01', '13/08/26', '13/10/21', '13/12/16'];

function drawTimeline() {
  const svg = document.getElementById('timeline');
  svg.replaceChildren();
  const width = svg.clientWidth;
  const s = width / 1480;
  add(svg, 'rect', { x: 987 * s, y: 0, width: width - 987 * s, height: 19, class: 'selected' });
  add(svg, 'rect', { x: 987 * s, y: 0, width: width - 987 * s, height: 3, class: 'selected-top' });
  const wave = pts => pts.map(([x, y]) => `${x * s},${y}`).join(' ');
  add(svg, 'polyline', { class: 'history', points: wave([[534, 20], [546, 18], [572, 18], [588, 16], [612, 17], [630, 18], [650, 16], [664, 18], [680, 20]]) });
  add(svg, 'polyline', { class: 'history', points: wave([[770, 20], [800, 18], [826, 18], [838, 16], [858, 15], [880, 16], [896, 18], [930, 19], [955, 17], [987, 16], [987, 20]]) });
  add(svg, 'polyline', { class: 'history-selected', points: wave([[987, 16], [1040, 13], [1100, 10], [1150, 11], [1200, 7], [1260, 9], [1320, 6], [1380, 8], [1440, 4], [1480, 3]]) });
  HISTORY.forEach((date, i) => {
    const x = (5.3 + i * 76.33) * s;
    add(svg, 'line', { x1: x, y1: 0, x2: x, y2: 2, class: 'grid' });
    add(svg, 'text', { x: x - 1, y: 13, 'text-anchor': 'middle' }, date);
  });
}

function draw() {
  Object.keys(CHARTS).forEach(drawChart);
  drawTimeline();
}

window.addEventListener('resize', draw);
draw();
```
